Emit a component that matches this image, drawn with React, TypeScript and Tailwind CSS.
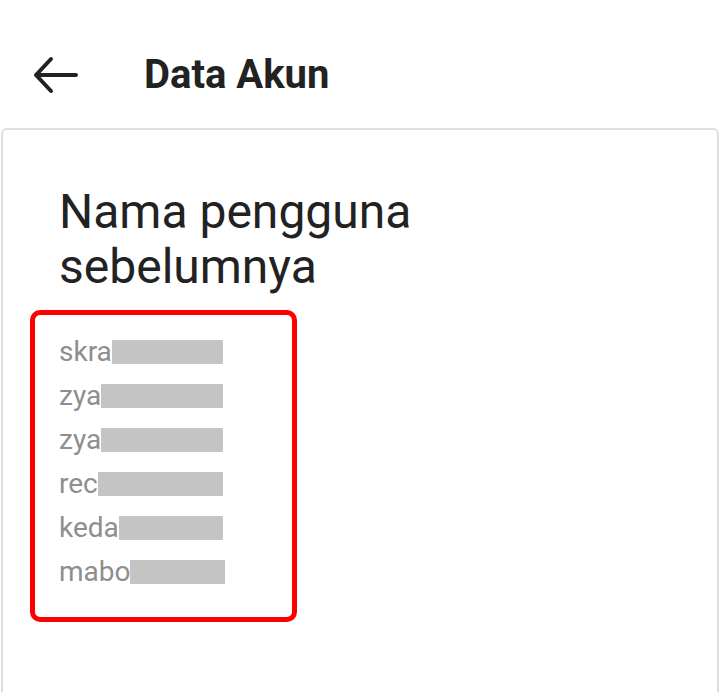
import React from 'react';

const names = [
  { shown: 'skra', row: 'w-[164px]' },
  { shown: 'zya', row: 'w-[164px]' },
  { shown: 'zya', row: 'w-[164px]' },
  { shown: 'rec', row: 'w-[164px]' },
  { shown: 'keda', row: 'w-[164px]' },
  { shown: 'mabo', row: 'w-[166px]' },
];

const BackArrow: React.FC = () => (
  <svg width="48" height="38" viewBox="0 0 48 38" fill="none">
    <path
      d="M44 19H4M19 3L4 19l15 16"
      stroke="#222222"
      strokeWidth="4"
      strokeLinecap="round"
      strokeLinejoin="round"
    />
  </svg>
);

const App: React.FC = () => {
  return (
    <div className="h-[692px] bg-white flex flex-col font-['Roboto',sans-serif] overflow-hidden">
      <header className="h-[128px] shrink-0 pt-[22px] flex items-center">
        <div className="ml-[32px] flex items-center">
          <BackArrow />
        </div>
        <h1 className="ml-[64px] text-[40px] font-bold text-[#222222] leading-none">Data Akun</h1>
      </header>

      <div className="shrink-0 h-[640px] mx-[1px] border-2 border-[#dedede] rounded-[6px] pt-[54px] pl-[27px]">
        <h2 className="ml-[29px] text-[48px] leading-[55px] text-[#222222] font-normal">
          Nama pengguna
          <br />
          sebelumnya
        </h2>

        <div className="mt-[16px] w-[267px] border-[5px] border-[#ff0000] rounded-[10px] pl-[24px] pt-[15px] pb-[23px]">
          {names.map((n, i) => (
            <div key={i} className={`h-[44px] flex items-center ${n.row}`}>
              <span className="text-[28px] text-[#8e8e8e] leading-none">{n.shown}</span>
              <span className="flex-1 h-[24px] bg-[#c4c4c4]" />
            </div>
          ))}
        </div>
      </div>
    </div>
  );
};

export default App;
